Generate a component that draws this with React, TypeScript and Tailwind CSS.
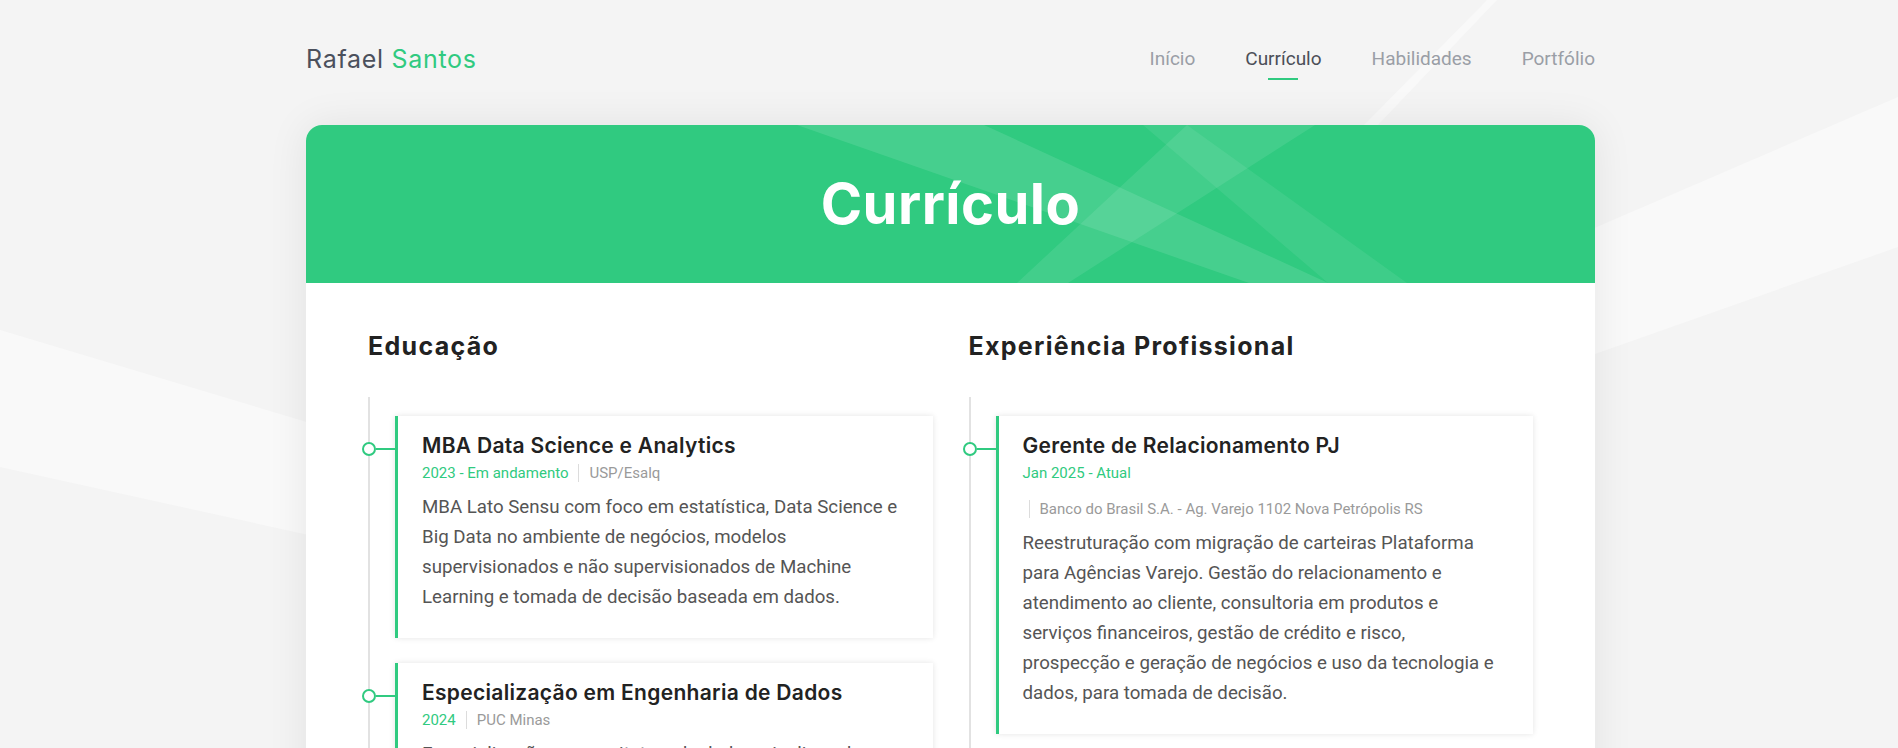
import { ReactNode } from 'react'

const GREEN = '#30ca80'

const navItems = [
  { label: 'Início', active: false },
  { label: 'Currículo', active: true },
  { label: 'Habilidades', active: false },
  { label: 'Portfólio', active: false },
]

const education = [
  {
    title: 'MBA Data Science e Analytics',
    date: '2023 - Em andamento',
    place: 'USP/Esalq',
    text: 'MBA Lato Sensu com foco em estatística, Data Science e Big Data no ambiente de negócios, modelos supervisionados e não supervisionados de Machine Learning e tomada de decisão baseada em dados.',
  },
  {
    title: 'Especialização em Engenharia de Dados',
    date: '2024',
    place: 'PUC Minas',
    text: 'Especialização em arquitetura de dados, pipelines de ingestão e processamento, computação em nuvem e governança de grandes volumes de dados.',
  },
]

const experience = [
  {
    title: 'Gerente de Relacionamento PJ',
    date: 'Jan 2025 - Atual',
    place: 'Banco do Brasil S.A. - Ag. Varejo 1102 Nova Petrópolis RS',
    text: 'Reestruturação com migração de carteiras Plataforma para Agências Varejo. Gestão do relacionamento e atendimento ao cliente, consultoria em produtos e serviços financeiros, gestão de crédito e risco, prospecção e geração de negócios e uso da tecnologia e dados, para tomada de decisão.',
  },
  {
    title: 'Assistente de Negócios',
    date: '2019 - 2024',
    place: 'Banco do Brasil S.A.',
    text: 'Atendimento a clientes pessoa jurídica e apoio à gestão de carteira.',
  },
]

type Item = { title: string; date: string; place: string; text: string }

function TimelineCard({ item }: { item: Item }) {
  return (
    <div className="relative bg-white border-l-[3px] border-[#30ca80] shadow-[0_0_6px_rgba(0,0,0,0.11)] pl-[24px] pr-[29px] pt-[16px] pb-[26px]">
      {/* dot + connector */}
      <span className="absolute left-[-36px] top-[26px] w-[14px] h-[14px] rounded-full border-2 border-[#30ca80] bg-white" />
      <span className="absolute left-[-22px] top-[32px] w-[19px] h-[2px] bg-[#30ca80]" />

      <h3 className="font-['Inter',sans-serif] text-[21px] leading-[28px] font-semibold text-[#222] tracking-[0.3px]">
        {item.title}
      </h3>
      <div className="mt-[2px] flex flex-wrap items-center gap-y-[14px] font-['Roboto',sans-serif] text-[15px] leading-[22px]">
        <span className="pr-[4px]" style={{ color: GREEN }}>{item.date}</span>
        <span className="flex items-center ml-[6px]">
          <span className="block h-[18px] border-l border-[#dcdcdc]" />
          <span className="pl-[10px] text-[#9a9a9a]">{item.place}</span>
        </span>
      </div>
      <p className="mt-[8px] font-['Roboto',sans-serif] text-[18.7px] leading-[30px] text-[#555]">
        {item.text}
      </p>
    </div>
  )
}

function Column({ title, children }: { title: string; children: ReactNode }) {
  return (
    <section>
      <h2 className="font-['Inter',sans-serif] text-[25px] leading-[32px] font-bold text-[#222] tracking-[1.3px]">{title}</h2>
      <div className="mt-[35px] border-l-2 border-[#e2e2e2] pt-[19px] pl-[25px] flex flex-col gap-[25px]">
        {children}
      </div>
    </section>
  )
}

export default function App() {
  return (
    <div className="relative h-[748px] overflow-hidden bg-[#f4f4f4]">
      {/* background bands */}
      <svg className="absolute inset-0 pointer-events-none" width="1898" height="748" viewBox="0 0 1898 748">
        <polygon points="0,330 700,540 700,621 0,467" fill="#f9f9f9" />
        <polygon points="1300,355 1898,97 1898,247 1300,458" fill="#f9f9f9" />
        <polygon points="1487,0 1497,0 1378,125 1364,125" fill="#f9f9f9" />
      </svg>

      <div className="relative w-[1289px] ml-[306px]">
        {/* Header */}
        <header className="h-[118px] flex items-center justify-between">
          <div className="font-['Inter',sans-serif] text-[25px] leading-[32px] text-[#4b505c] tracking-[0.7px]">
            Rafael <span style={{ color: GREEN }}>Santos</span>
          </div>
          <nav className="flex items-center gap-[50px] font-['Roboto',sans-serif] text-[19px] leading-[28px]">
            {navItems.map((item) => (
              <a
                key={item.label}
                className={`relative ${item.active ? 'text-[#4b4f58]' : 'text-[#9a9ea6]'}`}
              >
                {item.label}
                {item.active && (
                  <span className="absolute left-1/2 -translate-x-1/2 top-[calc(100%+5px)] w-[30px] h-[2px] bg-[#30ca80]" />
                )}
              </a>
            ))}
          </nav>
        </header>

        {/* Card */}
        <main className="mt-[7px] rounded-[16px] overflow-hidden bg-white shadow-[0_0_40px_rgba(0,0,0,0.08)]">
          <div className="relative h-[158px] bg-[#30ca80] flex items-center justify-center">
            <svg className="absolute inset-0 w-full h-full" viewBox="0 0 1289 158" preserveAspectRatio="none">
              <polygon points="491,0 678,0 1022,158 943,158" fill="#fff" fillOpacity="0.11" />
              <polygon points="881,0 1009,0 762,158 711,158" fill="#fff" fillOpacity="0.09" />
              <polygon points="837,0 881,0 1101,158 1022,158" fill="#fff" fillOpacity="0.07" />
            </svg>
            <h1 className="relative font-['Inter',sans-serif] text-[56px] leading-[64px] font-bold text-white tracking-[0.5px]">
              Currículo
            </h1>
          </div>

          <div className="px-[62px] pt-[47px] pb-[60px] grid grid-cols-2 gap-x-[36px]">
            <Column title="Educação">
              {education.map((e) => (
                <TimelineCard key={e.title} item={e} />
              ))}
            </Column>
            <Column title="Experiência Profissional">
              {experience.map((e) => (
                <TimelineCard key={e.title} item={e} />
              ))}
            </Column>
          </div>
        </main>
      </div>
    </div>
  )
}
